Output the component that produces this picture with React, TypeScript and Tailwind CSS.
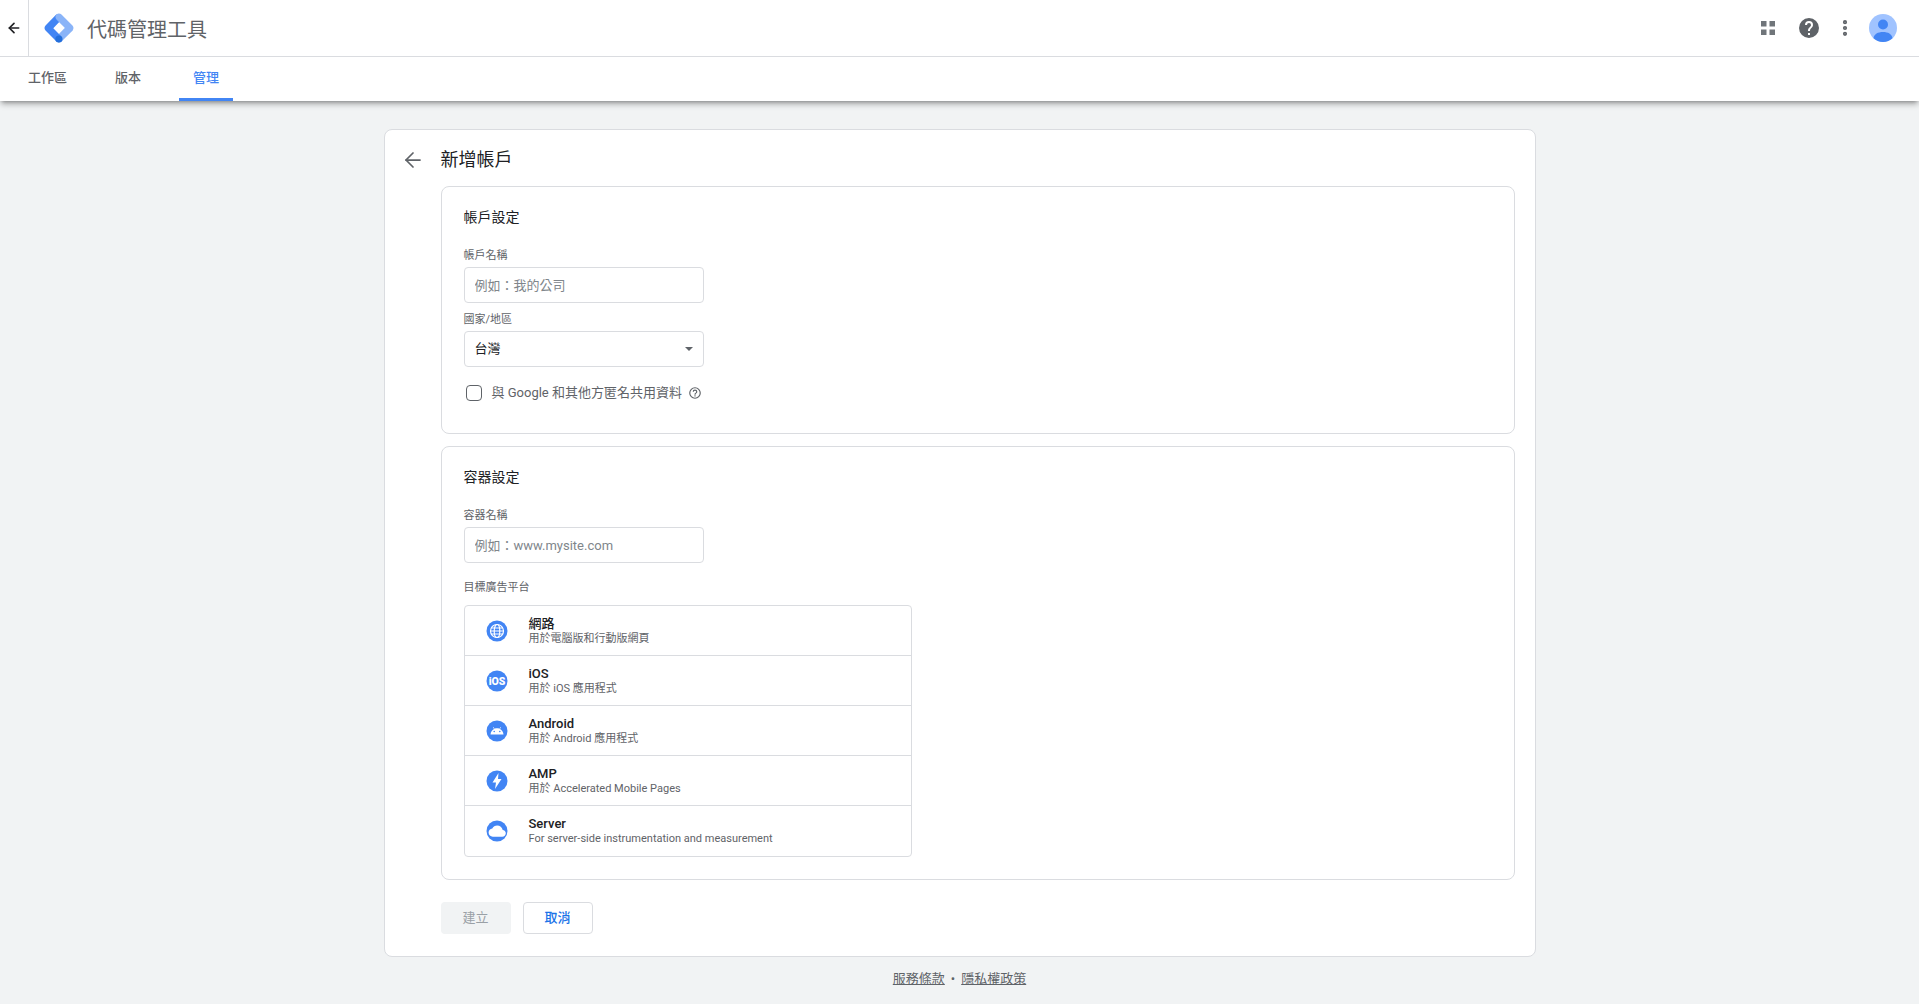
import React from 'react';
import { ArrowLeft, MoreVertical } from 'lucide-react';

const platforms = [
  { key: 'web', title: '網路', sub: '用於電腦版和行動版網頁' },
  { key: 'ios', title: 'iOS', sub: '用於 iOS 應用程式' },
  { key: 'android', title: 'Android', sub: '用於 Android 應用程式' },
  { key: 'amp', title: 'AMP', sub: '用於 Accelerated Mobile Pages' },
  { key: 'server', title: 'Server', sub: 'For server-side instrumentation and measurement' },
];

const Logo = () => (
  <svg viewBox="0 0 192 192" className="w-8 h-8">
    <path fill="#8AB4F8" d="M111.31 176.79 80.76 147l65.61-67L178 111z" />
    <path fill="#4285F4" d="M111.44 45.08 81 14 15.21 80.79c-8.28 8.28-8.28 21.7 0 29.99l65.52 66.01 30-30-49-50z" />
    <path fill="#8AB4F8" d="m176.79 80.76-66-66c-8.29-8.29-21.73-8.29-30.02 0s-8.29 21.73 0 30.02l66 66c8.29 8.29 21.73 8.29 30.02 0s8.29-21.73 0-30.02z" />
    <circle fill="#246FDB" cx="95.5" cy="162.5" r="21.5" />
  </svg>
);

const PlatformIcon = ({ kind }: { kind: string }) => (
  <svg viewBox="0 0 24 24" className="w-6 h-6">
    <circle cx="12" cy="12" r="10.5" fill="#4285f4" />
    {kind === 'web' && (
      <g fill="none" stroke="#fff" strokeWidth="1.2">
        <circle cx="12" cy="12" r="6.5" />
        <ellipse cx="12" cy="12" rx="2.8" ry="6.5" />
        <path d="M5.5 12h13M6.4 9h11.2M6.4 15h11.2" />
      </g>
    )}
    {kind === 'ios' && (
      <text x="12" y="15.6" textAnchor="middle" fill="#fff" fontSize="10.5" fontWeight="900" fontFamily="Roboto, sans-serif">
        iOS
      </text>
    )}
    {kind === 'android' && (
      <path
        fill="#fff"
        d="M5.5 15.5c.2-2.4 1.5-4.4 3.5-5.5L8 8.2l.5-.3 1 1.8c.8-.4 1.6-.5 2.5-.5s1.700.1 2.500.5l1-1.800.5.3-1 1.800c2 1.100 3.300 3.100 3.500 5.500zm3.700-2.200a.8.8 0 1 0 0-1.600.8.8 0 0 0 0 1.600zm5.600 0a.8.8 0 1 0 0-1.600.8.8 0 0 0 0 1.600z"
      />
    )}
    {kind === 'amp' && <path fill="#fff" d="M13.500 4 7.500 13.500h3.500L10 20l6.500-10H13z" />}
    {kind === 'server' && (
      <path
        fill="#fff"
        d="M17.700 11c-.5-2.600-2.800-4.500-5.500-4.500-2.100 0-4 1.200-4.900 3C5.200 9.700 3.600 11.500 3.600 13.600c0 2.300 1.900 4.200 4.200 4.200h9.500c1.900 0 3.500-1.600 3.500-3.500 0-1.800-1.400-3.200-3.100-3.300z"
      />
    )}
  </svg>
);

const Field = ({ label, className, children }: { label: string; className?: string; children: React.ReactNode }) => (
  <div className={className}>
    <div className="text-[11px] leading-3.5 text-[#5f6368] mb-1">{label}</div>
    {children}
  </div>
);

const TextBox = ({ placeholder }: { placeholder: string }) => (
  <input
    placeholder={placeholder}
    className="block w-60 h-9 px-2.5 text-[13px] text-[#202124] placeholder:text-[#80868b] border border-[#dadce0] rounded outline-none"
  />
);

export default function App() {
  return (
    <div className="min-h-screen bg-[#f1f3f4] font-['Roboto','Noto_Sans_CJK_TC',sans-serif]">
      <header className="bg-white shadow-md shadow-black/30">
        <div className="h-14 box-content border-b border-[#dadce0] flex items-center">
          <div className="w-7 h-full box-content flex items-center justify-center border-r border-[#dadce0]">
            <ArrowLeft className="w-4 h-4 text-[#202124]" strokeWidth={2.5} />
          </div>
          <div className="ml-3.5 mr-3">
            <Logo />
          </div>
          <span className="mt-1 text-xl text-[#5f6368]">代碼管理工具</span>
          <div className="ml-auto flex items-center gap-3.5 pr-5.5">
            <svg viewBox="0 0 14 14" className="w-3.5 h-3.5 mr-2" fill="#70757a">
              <rect width="5.5" height="5.5" />
              <rect x="8.5" width="5.5" height="5.5" />
              <rect y="8.5" width="5.500" height="5.5" />
              <rect x="8.5" y="8.5" width="5.5" height="5.5" />
            </svg>
            <svg viewBox="0 0 24 24" className="w-6 h-6" fill="#5f6368">
              <path d="M12 2a10 10 0 1 0 0 20 10 10 0 0 0 0-20zm1 17h-2v-2h2zm2.100-7.700-.900.900c-.7.700-1.200 1.300-1.200 2.800h-2v-.5c0-1.100.5-2.100 1.200-2.800l1.200-1.300c.4-.3.600-.8.600-1.400a2 2 0 0 0-4 0H8a4 4 0 0 1 8 0c0 .9-.4 1.700-.9 2.300z" />
            </svg>
            <MoreVertical className="w-5 h-5 text-[#5f6368]" strokeWidth={3} />
            <svg viewBox="0 0 28 28" className="w-7 h-7">
              <circle cx="14" cy="14" r="14" fill="#a0c3ff" />
              <circle cx="14" cy="10.500" r="5" fill="#4285f4" />
              <path fill="#4285f4" d="M4.500 24.300C5 20 9 18 14 18s9 2 9.500 6.300A14 14 0 0 1 14 28a14 14 0 0 1-9.500-3.700z" />
            </svg>
          </div>
        </div>
        <nav className="h-11 flex pl-4 gap-6 text-[13px] font-medium text-[#5f6368]">
          <div className="px-3 flex items-center border-b-3 border-transparent">工作區</div>
          <div className="px-3 flex items-center border-b-3 border-transparent">版本</div>
          <div className="ml-0.5 px-3.5 flex items-center text-[#4285f4] border-b-3 border-[#4285f4]">管理</div>
        </nav>
      </header>

      <main className="max-w-6xl mx-auto pt-7">
        <div className="bg-white border border-[#dadce0] rounded-lg pt-4 pb-5.5">
          <div className="flex items-center gap-4 pl-4 mb-3">
            <ArrowLeft className="w-6 h-6 text-[#5f6368]" strokeWidth={1.75} />
            <h1 className="text-lg leading-7 text-[#202124]">新增帳戶</h1>
          </div>
          <div className="pl-14 pr-5 flex flex-col gap-3">
            <section className="border border-[#dadce0] rounded-lg px-5.5 pt-5 pb-7">
              <h2 className="text-sm leading-5 text-[#202124]">帳戶設定</h2>
              <Field label="帳戶名稱" className="mt-5.5">
                <TextBox placeholder="例如：我的公司" />
              </Field>
              <Field label="國家/地區" className="mt-2.5">
                <div className="w-60 h-9 px-2.5 flex items-center justify-between text-[13px] text-[#202124] border border-[#dadce0] rounded">
                  台灣
                  <span className="border-x-4 border-t-4 border-x-transparent border-t-[#5f6368]" />
                </div>
              </Field>
              <div className="mt-3.5 h-6 flex items-center text-[13px] text-[#5f6368]">
                <span className="ml-0.5 w-4 h-4 border border-[#5f6368] rounded-sm mr-2.5" />
                與 Google 和其他方匿名共用資料
                <svg viewBox="0 0 24 24" className="w-3.5 h-3.5 ml-1.5" fill="#5f6368">
                  <path d="M11 18h2v-2h-2zm1-16a10 10 0 1 0 0 20 10 10 0 0 0 0-20zm0 18a8 8 0 1 1 0-16 8 8 0 0 1 0 16zm0-14a4 4 0 0 0-4 4h2a2 2 0 0 1 4 0c0 2-3 1.750-3 5h2c0-2.250 3-2.500 3-5a4 4 0 0 0-4-4z" />
                </svg>
              </div>
            </section>

            <section className="border border-[#dadce0] rounded-lg px-5.5 pt-5 pb-5.5">
              <h2 className="text-sm leading-5 text-[#202124]">容器設定</h2>
              <Field label="容器名稱" className="mt-5.5">
                <TextBox placeholder="例如：www.mysite.com" />
              </Field>
              <div className="mt-4.5 text-[11px] leading-3.5 text-[#5f6368]">目標廣告平台</div>
              <div className="mt-2.5 max-w-md border border-[#dadce0] rounded divide-y divide-[#dadce0]">
                {platforms.map((p) => (
                  <div key={p.key} className="h-12.5 flex items-center pl-5 gap-5">
                    <PlatformIcon kind={p.key} />
                    <div>
                      <div className="text-[13px] leading-4 font-medium text-[#202124]">{p.title}</div>
                      <div className="text-[11px] leading-3.5 text-[#5f6368]">{p.sub}</div>
                    </div>
                  </div>
                ))}
              </div>
            </section>
          </div>
          <div className="pl-14 mt-5.5 flex gap-3">
            <button className="w-17.5 h-8 rounded bg-[#f1f3f4] text-[13px] text-[#9aa0a6]">建立</button>
            <button className="w-17.5 h-8 rounded bg-white border border-[#dadce0] text-[13px] font-medium text-[#1a73e8]">取消</button>
          </div>
        </div>
        <footer className="mt-3.5 text-center text-[13px] leading-4 text-[#5f6368]">
          <a className="underline">服務條款</a>
          <span className="mx-1.5">•</span>
          <a className="underline">隱私權政策</a>
        </footer>
      </main>
    </div>
  );
}
